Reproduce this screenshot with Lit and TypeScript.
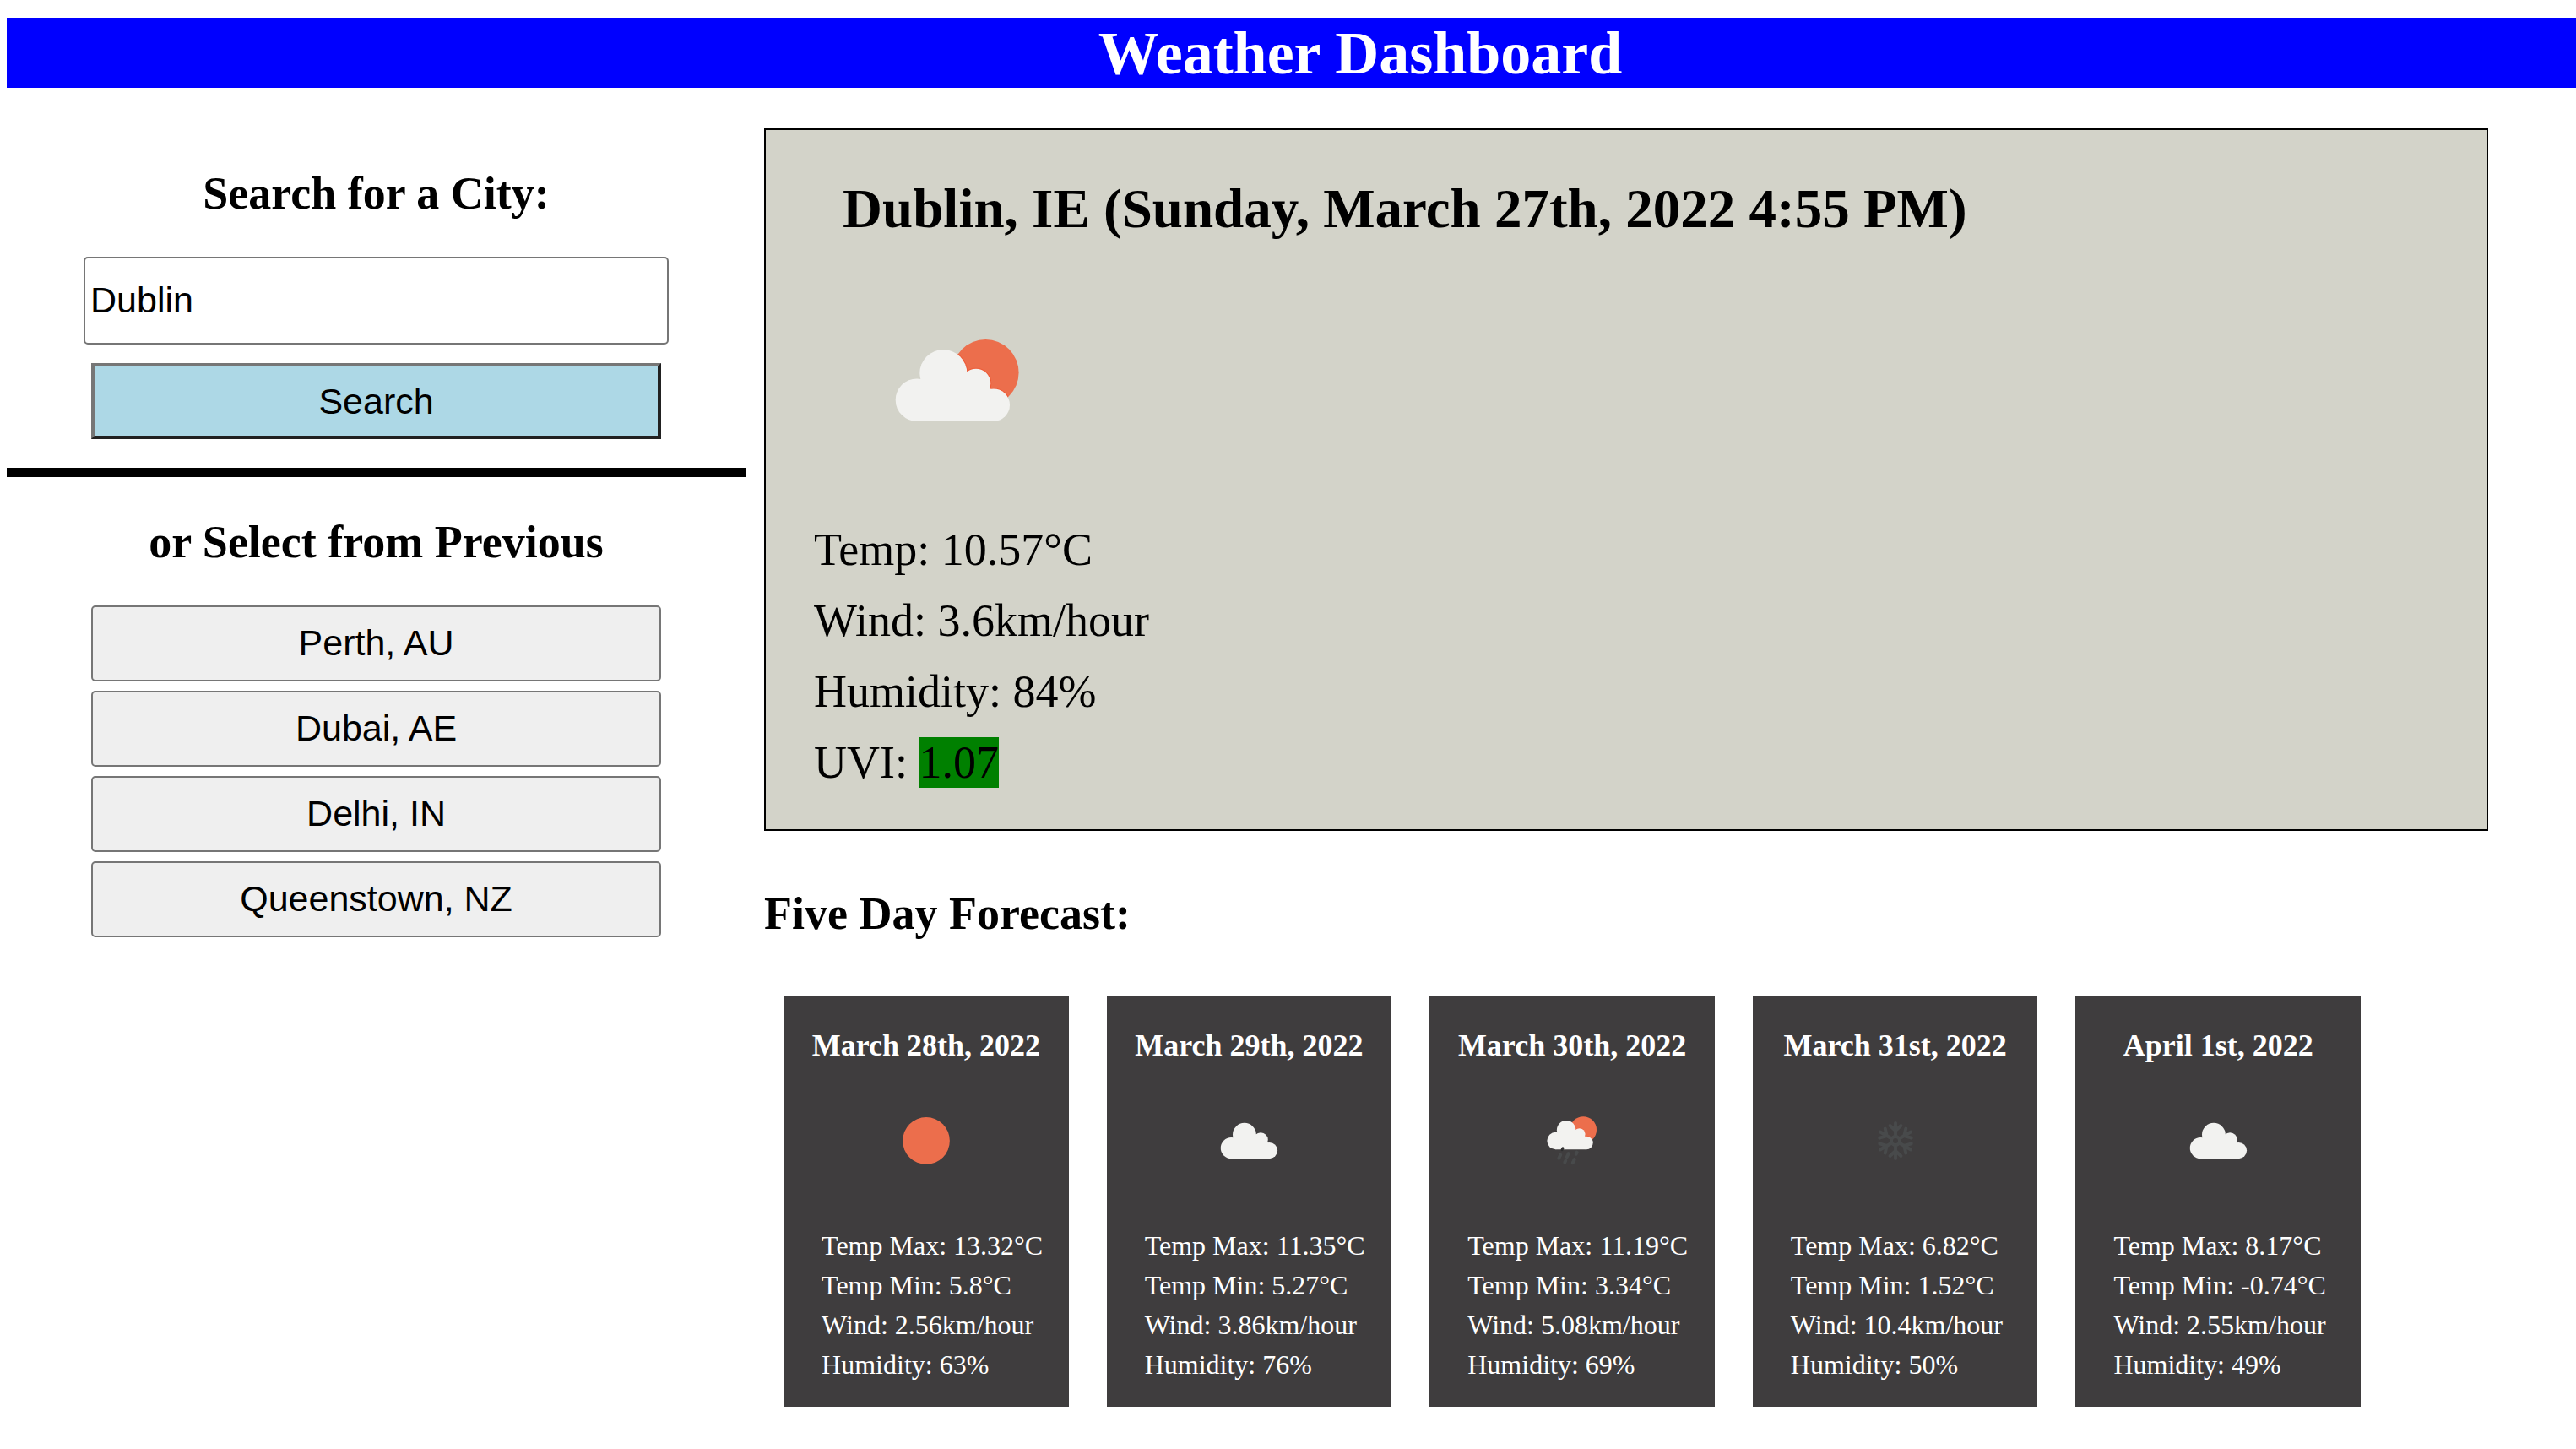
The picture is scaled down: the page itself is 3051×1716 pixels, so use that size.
import { LitElement, html, css, svg } from "lit";
import { customElement, property, state } from "lit/decorators.js";

type IconName = "sun" | "cloud" | "sun-cloud" | "rain" | "snow";

interface Day {
  date: string;
  icon: IconName;
  max: string;
  min: string;
  wind: string;
  humidity: string;
}

const CLOUD = svg`
  <circle cx="96.3" cy="104" r="28"></circle>
  <circle cx="65" cy="135.7" r="25.3"></circle>
  <circle cx="135" cy="116" r="17.3"></circle>
  <circle cx="155.7" cy="141.7" r="19.3"></circle>
  <path d="M65 161 V112 H72 L96 100 L126 104 L150 122 L156 124 V161 Z"></path>`;

const SUN_BEHIND_CLOUD = svg`
  <clipPath id="sun-clip"><circle cx="146.3" cy="103.3" r="39.3"></circle></clipPath>
  <circle class="sun" cx="146.3" cy="103.3" r="39.3"></circle>
  <g class="cloud-rim" clip-path="url(#sun-clip)">${CLOUD}</g>
  <g class="cloud">${CLOUD}</g>`;

const SNOW_ARMS = [0, 60, 120, 180, 240, 300];

const ICONS = {
  sun: svg`<circle class="sun" cx="112.5" cy="112.5" r="56"></circle>`,
  cloud: svg`<g class="cloud" transform="translate(6 -6)">${CLOUD}</g>`,
  "sun-cloud": SUN_BEHIND_CLOUD,
  rain: svg`
    <g transform="translate(21 3) scale(0.807)">${SUN_BEHIND_CLOUD}</g>
    <path class="notch" d="M88.5 134 L90.5 130"></path>
    <path class="faint" d="M81 154 L85 146 M100 151 L104 143 M122 144 L124 140 M95 164 L97 160 M114 165 L118 157"></path>`,
  snow: svg`
    <g class="faint" transform="translate(112.5 112.5)">
      <circle r="10"></circle>
      ${SNOW_ARMS.map(
        (a) => svg`<path transform="rotate(${a})" d="M0 -12 V-42 M0 -24 L-13 -36 M0 -24 L13 -36"></path>`
      )}
    </g>`,
};

@customElement("weather-icon")
export class WeatherIcon extends LitElement {
  @property() name: IconName = "sun";

  static styles = css`
    :host {
      display: block;
    }
    .icon {
      display: block;
      width: 100%;
      height: 100%;
    }
    .sun {
      fill: #ec6e4c;
    }
    .cloud {
      fill: #f2f2f0;
    }
    .cloud-rim {
      fill: #ee5a36;
      stroke: #ee5a36;
      stroke-width: 2;
    }
    .faint {
      fill: none;
      stroke: #484a4b;
      stroke-width: 8;
      stroke-linecap: round;
    }
    .notch {
      fill: none;
      stroke: #2f2f30;
      stroke-width: 6;
      stroke-linecap: round;
    }
  `;

  render() {
    return html`<svg class="icon" viewBox="0 0 225 225" aria-hidden="true">${ICONS[this.name]}</svg>`;
  }
}

@customElement("forecast-card")
export class ForecastCard extends LitElement {
  @property({ attribute: false }) day!: Day;

  static styles = css`
    :host {
      display: block;
      flex: 1;
      min-width: 0;
    }
    .card {
      padding: 38px 0 26px;
      background: #3f3d3e;
      color: #fff;
    }
    .date {
      margin: 0;
      font-size: 36px;
      line-height: 41px;
      text-align: center;
    }
    .picture {
      width: 112px;
      height: 112px;
      margin: 36px auto 45px;
    }
    .facts {
      margin: 0;
      padding: 0 0 0 45px;
      list-style: none;
      font-size: 32px;
      line-height: 47px;
      white-space: nowrap;
    }
  `;

  render() {
    const d = this.day;
    return html`
      <article class="card">
        <h4 class="date">${d.date}</h4>
        <weather-icon class="picture" name=${d.icon}></weather-icon>
        <ul class="facts">
          <li>Temp Max: ${d.max}°C</li>
          <li>Temp Min: ${d.min}°C</li>
          <li>Wind: ${d.wind}km/hour</li>
          <li>Humidity: ${d.humidity}%</li>
        </ul>
      </article>
    `;
  }
}

@customElement("app-root")
export class AppRoot extends LitElement {
  @state() private city = "Dublin";

  private previous = ["Perth, AU", "Dubai, AE", "Delhi, IN", "Queenstown, NZ"];

  private days: Day[] = [
    { date: "March 28th, 2022", icon: "sun", max: "13.32", min: "5.8", wind: "2.56", humidity: "63" },
    { date: "March 29th, 2022", icon: "cloud", max: "11.35", min: "5.27", wind: "3.86", humidity: "76" },
    { date: "March 30th, 2022", icon: "rain", max: "11.19", min: "3.34", wind: "5.08", humidity: "69" },
    { date: "March 31st, 2022", icon: "snow", max: "6.82", min: "1.52", wind: "10.4", humidity: "50" },
    { date: "April 1st, 2022", icon: "cloud", max: "8.17", min: "-0.74", wind: "2.55", humidity: "49" },
  ];

  static styles = css`
    :host {
      display: block;
      padding: 21px 0 48px 8px;
      background: #fff;
      color: #000;
      font-family: "Liberation Serif", "Times New Roman", serif;
    }
    .title {
      margin: 0 0 48px;
      padding: 1px 0 0 163px;
      background: #00f;
      color: #fff;
      font-size: 72px;
      line-height: 82px;
      text-align: center;
    }
    .columns {
      display: grid;
      grid-template-columns: 3fr 7fr;
      column-gap: 22px;
      align-items: start;
      margin-right: 104px;
    }
    .heading {
      margin: 0;
      font-size: 54px;
      line-height: 62px;
    }
    .side {
      padding-top: 46px;
    }
    .side .heading {
      text-align: center;
    }
    .search,
    .history {
      display: flex;
      flex-direction: column;
      padding: 44px 100px 0;
    }
    .search {
      gap: 22px;
      padding-bottom: 34px;
    }
    .history {
      gap: 11px;
    }
    .field,
    .button {
      box-sizing: border-box;
      color: #000;
      font-family: "Liberation Sans", Arial, sans-serif;
      font-size: 43px;
    }
    .field {
      height: 104px;
      margin: 0 -9px;
      padding: 0 6px 2px;
      border: 2px solid #767676;
      border-radius: 5px;
      background: #fff;
    }
    .button {
      height: 90px;
      padding: 0 0 2px;
      border: 2px solid #767676;
      border-radius: 5px;
      background: #efefef;
    }
    .primary {
      padding: 0;
      border-width: 4px;
      border-color: #767676 #212121 #212121 #767676;
      border-radius: 0;
      background: lightblue;
    }
    .rule {
      height: 11px;
      margin: 0 0 46px;
      border: 0;
      background: #000;
    }
    .current {
      padding: 56px 57px 48px;
      border: 2px solid #000;
      background: #d3d3c9;
    }
    .place {
      margin: 0 0 53px;
      padding-left: 34px;
      font-size: 65px;
      line-height: 75px;
    }
    .now-icon {
      width: 225px;
      height: 225px;
      margin: 0 0 57px 57px;
    }
    .readings {
      display: flex;
      flex-direction: column;
      gap: 22px;
      margin: 0;
      padding: 0;
      list-style: none;
      font-size: 54px;
      line-height: 62px;
    }
    .uvi {
      background: green;
    }
    .main .heading {
      margin: 67px 0;
    }
    .forecast {
      display: flex;
      gap: 45px;
      padding: 0 151px 0 23px;
    }
  `;

  private onInput(e: Event) {
    this.city = (e.target as HTMLInputElement).value;
  }

  private onSubmit(e: Event) {
    e.preventDefault();
  }

  render() {
    return html`
      <header><h1 class="title">Weather Dashboard</h1></header>
      <div class="columns">
        <aside class="side">
          <h3 class="heading"><label for="city">Search for a City:</label></h3>
          <form class="search" @submit=${this.onSubmit}>
            <input class="field" id="city" type="text" .value=${this.city} @input=${this.onInput} />
            <button class="button primary" type="submit">Search</button>
          </form>
          <hr class="rule" />
          <h3 class="heading">or Select from Previous</h3>
          <div class="history">
            ${this.previous.map((name) => html`<button class="button" type="button">${name}</button>`)}
          </div>
        </aside>
        <main class="main">
          <section class="current">
            <h2 class="place">Dublin, IE (Sunday, March 27th, 2022 4:55 PM)</h2>
            <weather-icon class="now-icon" name="sun-cloud"></weather-icon>
            <ul class="readings">
              <li>Temp: 10.57°C</li>
              <li>Wind: 3.6km/hour</li>
              <li>Humidity: 84%</li>
              <li>UVI: <span class="uvi">1.07</span></li>
            </ul>
          </section>
          <h3 class="heading">Five Day Forecast:</h3>
          <section class="forecast">
            ${this.days.map((d) => html`<forecast-card .day=${d}></forecast-card>`)}
          </section>
        </main>
      </div>
    `;
  }
}
